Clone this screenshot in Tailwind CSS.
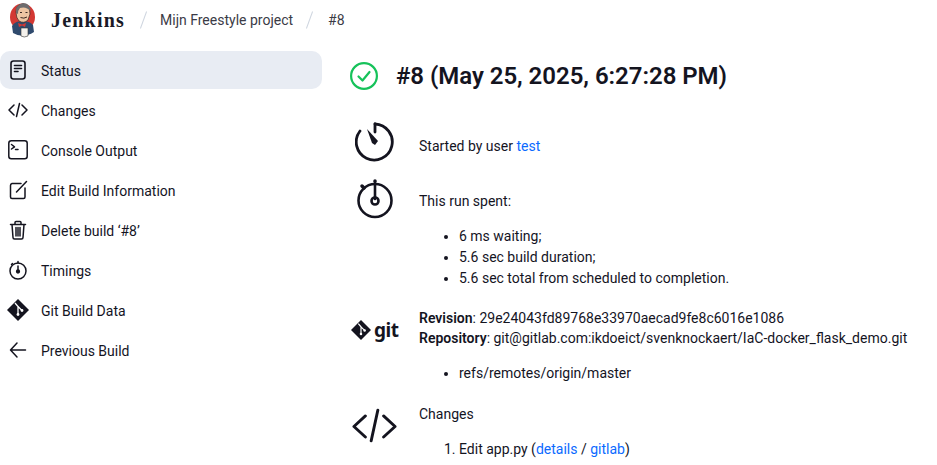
<!DOCTYPE html>
<html lang="en">
<head>
    <meta charset="UTF-8">
    <title>Jenkins</title>
    <script src="https://cdn.jsdelivr.net/npm/@tailwindcss/browser@4"></script>
</head>
<body class="bg-white h-[465px] w-[937px] overflow-hidden font-['Roboto',sans-serif] text-[14px] text-[#14141f]">
    <header class="h-[40px] flex items-center">
        <svg class="ml-[9px] w-[28px] h-[36px] shrink-0" viewBox="0 0 28 36">
            <ellipse cx="13.500" cy="15" rx="12.500" ry="13.500" fill="#d33833"/>
            <path d="M3 24 Q7 18 13 20 Q20 18 24 23 L25 30 Q14 37 4 31 Z" fill="#2f4a6d"/>
            <path d="M7 10 Q7 2 14 2 Q21 3 21 12 L19 18 Q15 22 10 19 Q7 16 7 10 Z" fill="#eec5a2" stroke="#3a2a24" stroke-width="0.700"/>
            <path d="M7 11 Q6 3 14 1 Q21 1 21.500 9 Q17 4 11 6 Q9 8 9 12 Z" fill="#6d6b6d"/>
            <path d="M11 10.500H13M16.500 10.500H18.500M11.500 15.500Q15 17 18 15" stroke="#3a2a24" stroke-width="1" fill="none"/>
            <path d="M9 21 L13 22.500 L17 21 L16 25 L13 23.500 L10 25 Z" fill="#d33833"/>
            <path d="M12 26 H19 V34 Q15 36 12 34 Z" fill="#f4f1ec" stroke="#333" stroke-width="0.600"/>
        </svg>
        <span class="ml-[14px] -mt-[1px] font-['Liberation_Serif',serif] font-bold text-[20px] tracking-[1.2px] text-[#1a1a26]">Jenkins</span>
        <span class="ml-[18px] w-px h-[18px] bg-[#cfd6e0] rotate-[20deg]"></span>
        <span class="ml-[16px] text-[#3b3b46]">Mijn Freestyle project</span>
        <span class="ml-[16px] w-px h-[18px] bg-[#cfd6e0] rotate-[20deg]"></span>
        <span class="ml-[18px] text-[#3b3b46]">#8</span>
    </header>
    <div class="flex mt-[11px]">
        <nav class="w-[322px] shrink-0 flex flex-col gap-[2px]">
            <a class="h-[38px] flex items-center gap-[13px] pl-[8px] bg-[#e8ecf3] rounded-[10px]">
                <svg class="w-[20px] h-[20px]" viewBox="0 0 20 20" fill="none" stroke="#14141f" stroke-width="1.600" stroke-linecap="round"><rect x="3" y="1" width="14" height="18" rx="2.500"/><path d="M6.500 5.500H13.500M6.500 8.500H13.500M6.500 11.500H10"/></svg>
                <span class="pt-[2px]">Status</span>
            </a>
            <a class="h-[38px] flex items-center gap-[13px] pl-[8px]">
                <svg class="w-[20px] h-[20px]" viewBox="0 0 20 20" fill="none" stroke="#14141f" stroke-width="1.500" stroke-linecap="round" stroke-linejoin="round"><path d="M6 5L1 10L6 15M14 5L19 10L14 15M11.500 3.500L8.500 16.500"/></svg>
                <span class="pt-[2px]">Changes</span>
            </a>
            <a class="h-[38px] flex items-center gap-[13px] pl-[8px]">
                <svg class="w-[20px] h-[20px]" viewBox="0 0 20 20" fill="none" stroke="#14141f" stroke-width="1.500" stroke-linecap="round" stroke-linejoin="round"><rect x="0.800" y="0.800" width="18.400" height="18" rx="2.500"/><path d="M3.500 4.500L6.500 6.800L3.500 9M7.500 9.500H10"/></svg>
                <span class="pt-[2px]">Console Output</span>
            </a>
            <a class="h-[38px] flex items-center gap-[13px] pl-[8px]">
                <svg class="w-[20px] h-[20px]" viewBox="0 0 20 20" fill="none" stroke="#14141f" stroke-width="1.500" stroke-linecap="round" stroke-linejoin="round"><path d="M13 3.500H4A2 2 0 0 0 2.500 5.500V17A1.500 1.500 0 0 0 4 18.500H15.500A1.500 1.500 0 0 0 17 17V8"/><path d="M8.500 12L18.500 1.500"/></svg>
                <span class="pt-[2px]">Edit Build Information</span>
            </a>
            <a class="h-[38px] flex items-center gap-[13px] pl-[8px]">
                <svg class="w-[20px] h-[20px]" viewBox="0 0 20 20" fill="none" stroke="#14141f" stroke-width="1.500" stroke-linecap="round" stroke-linejoin="round"><path d="M2.500 4.500H17.500M7 4.500V2.500Q7 1.500 8 1.500H12Q13 1.500 13 2.500V4.500M4 4.500L5 17.500Q5 19 6.500 19H13.500Q15 19 15 17.500L16 4.500M8 7.500V16M10 7.500V16M12 7.500V16"/></svg>
                <span class="pt-[2px]">Delete build ‘#8’</span>
            </a>
            <a class="h-[38px] flex items-center gap-[13px] pl-[8px]">
                <svg class="w-[20px] h-[20px]" viewBox="0 0 20 20" fill="none" stroke="#14141f" stroke-width="1.500" stroke-linecap="round"><circle cx="10" cy="11" r="8"/><path d="M10 3V1.500M10 6V10M3.500 4.500L4.500 3.500"/><circle cx="10" cy="11.500" r="1.400" fill="#14141f"/></svg>
                <span class="pt-[2px]">Timings</span>
            </a>
            <a class="h-[38px] flex items-center gap-[13px] pl-[8px]">
                <svg class="w-[22px] h-[22px] -ml-[1px] -mr-[1px]" viewBox="0 0 22 22"><path d="M11 0L22 11L11 22L0 11Z" fill="#14141f"/><path d="M8 4L11 7.500V16M11 7.500L15 11.500" stroke="#fff" stroke-width="1.300" fill="none"/><circle cx="11" cy="15.500" r="1.400" fill="#fff"/><circle cx="15" cy="11.500" r="1.400" fill="#fff"/></svg>
                <span class="pt-[2px]">Git Build Data</span>
            </a>
            <a class="h-[38px] flex items-center gap-[13px] pl-[8px]">
                <svg class="w-[20px] h-[20px]" viewBox="0 0 20 20" fill="none" stroke="#14141f" stroke-width="1.500" stroke-linecap="round" stroke-linejoin="round"><path d="M9 3L2.500 10L9 17M3 10H17.500"/></svg>
                <span class="pt-[2px]">Previous Build</span>
            </a>
        </nav>
        <main class="ml-[28px] flex-1">
            <div class="h-[50px] flex items-center">
                <svg class="w-[28px] h-[28px]" viewBox="0 0 28 28" fill="none" stroke="#16c25a" stroke-width="2.200" stroke-linecap="round" stroke-linejoin="round"><circle cx="14" cy="14" r="12.900"/><path d="M8.500 14.500L12.500 18.500L19.500 10"/></svg>
                <h1 class="ml-[18px] text-[24px] font-semibold tracking-[-0.03px] text-[#14141f]">#8 (May 25, 2025, 6:27:28 PM)</h1>
            </div>
            <div class="flex mt-[21px] h-[48px] items-center">
                <div class="w-[69px] shrink-0 -mt-[8px]">
                    <svg class="ml-[5px] w-[40px] h-[40px]" viewBox="0 0 40 40" fill="none" stroke="#14141f" stroke-width="2.800" stroke-linecap="round"><path d="M20 2A18 18 0 1 1 5 9"/><path d="M20 2V10"/><path d="M12 7L23 19L20 23L17 21Z" fill="#14141f" stroke="none"/></svg>
                </div>
                <p>Started by user <a class="text-[#0b6aff]">test</a></p>
            </div>
            <div class="flex mt-[14px]">
                <div class="w-[69px] shrink-0">
                    <svg class="ml-[7px] w-[36px] h-[40px] -mt-[5px]" viewBox="0 0 36 40" fill="none" stroke="#14141f" stroke-width="2.600" stroke-linecap="round"><circle cx="18" cy="21.500" r="16.500"/><path d="M18 5V20"/><path d="M18 2V2.500M5 7L7 9" stroke-width="3.500"/><circle cx="18" cy="22" r="3.500" stroke-width="2.600"/></svg>
                </div>
                <div class="pt-[7px]">
                    <p class="leading-[21px]">This run spent:</p>
                    <ul class="mt-[14px] pl-[40px] list-disc leading-[21px]">
                        <li>6 ms waiting;</li>
                        <li>5.6 sec build duration;</li>
                        <li>5.6 sec total from scheduled to completion.</li>
                    </ul>
                </div>
            </div>
            <div class="flex mt-[18px]">
                <div class="w-[69px] shrink-0 pt-[11px]">
                    <div class="flex items-center h-[24px]">
                        <svg class="ml-[1px] w-[20px] h-[20px]" viewBox="0 0 22 22"><path d="M11 0L22 11L11 22L0 11Z" fill="#14141f"/><path d="M8 4L11 7.500V16M11 7.500L15 11.500" stroke="#fff" stroke-width="1.300" fill="none"/><circle cx="11" cy="15.500" r="1.400" fill="#fff"/><circle cx="15" cy="11.500" r="1.400" fill="#fff"/></svg>
                        <span class="ml-[3px] font-['Noto_Sans',sans-serif] font-bold text-[19px] leading-[24px] tracking-[-0.5px] text-[#14141f]">git</span>
                    </div>
                </div>
                <div>
                    <p class="pt-[1px] leading-[20px]"><b class="font-semibold">Revision</b>: 29e24043fd89768e33970aecad9fe8c6016e1086</p>
                    <p class="leading-[21px]"><b class="font-semibold">Repository</b>: git@gitlab.com:ikdoeict/svenknockaert/IaC-docker_flask_demo.git</p>
                    <ul class="mt-[14px] pl-[40px] list-disc leading-[21px]"><li>refs/remotes/origin/master</li></ul>
                </div>
            </div>
            <div class="flex mt-[20px]">
                <div class="w-[69px] shrink-0">
                    <svg class="ml-[2px] w-[45px] h-[35px] mt-[4px]" viewBox="0 0 47 36" fill="none" stroke="#14141f" stroke-width="3" stroke-linecap="round" stroke-linejoin="round"><path d="M14 8L2 19L14 30M33 8L45 19L33 30M27 2L20 34"/></svg>
                </div>
                <div>
                    <p class="leading-[21px]">Changes</p>
                    <ol class="mt-[14px] pl-[40px] list-decimal leading-[21px]"><li>Edit app.py (<a class="text-[#0b6aff]">details</a> / <a class="text-[#0b6aff]">gitlab</a>)</li></ol>
                </div>
            </div>
        </main>
    </div>
</body>
</html>
